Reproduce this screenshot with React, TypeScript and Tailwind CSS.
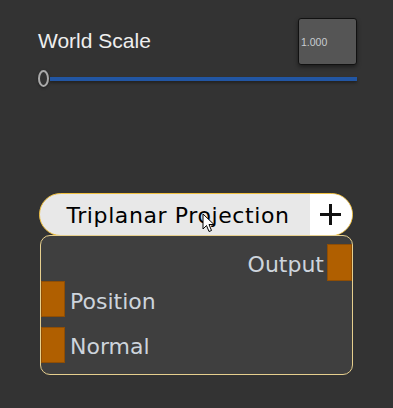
import React from "react";

function Port() {
  return <div className="w-[24px] h-[36px] shrink-0 bg-[#b05f00] border border-[#8f4e05]" />;
}

export default function App() {
  return (
    <div className="relative w-[393px] h-[408px] bg-[#333333] overflow-hidden pl-[38px] pr-[36px] pt-[18px]" style={{ fontFamily: '"Liberation Sans", Arial, sans-serif' }}>
      <div className="flex items-start justify-between">
        <div className="mt-[11px] text-[21px] leading-[24px] text-[#eeeeee]">World Scale</div>
        <div className="w-[59px] h-[47px] bg-[#555555] border border-[#111111] rounded-[3px] shadow-[0_2px_4px_rgba(0,0,0,0.45)] flex items-center pl-[2px] pt-[2px]">
          <span className="text-[10.5px] text-[#c8ccd0]">1.000</span>
        </div>
      </div>
      <div className="mt-[5px] h-[17px] flex items-center">
        <div className="w-[11px] h-[17px] rounded-[50%] border-2 border-[#aaaaaa] shrink-0 shadow-[0_1px_3px_rgba(0,0,0,0.4)]" />
        <div className="ml-[1px] flex-1 h-[4px] bg-[#2256a3] shadow-[0_2px_3px_rgba(0,0,0,0.35)]" />
      </div>

      <div className="mt-[106px] ml-px w-[314px]" style={{ fontFamily: '"DejaVu Sans", Verdana, sans-serif' }}>
        <div className="h-[43px] rounded-full border border-[#f0c040] bg-[#e8e8e8] overflow-hidden flex">
          <div className="flex-1 flex items-center justify-center text-[22px] leading-[43px] tracking-[0.6px] text-black pl-[6px] pt-[2px]">
            Triplanar Projection
          </div>
          <div className="w-[42px] bg-white flex items-center justify-center pr-[1px]">
            <svg width="21" height="21" viewBox="0 0 21 21">
              <path d="M0 10.5H21M10.5 0V21" stroke="#111" strokeWidth="3" />
            </svg>
          </div>
        </div>
        <div className="-mt-px ml-px w-[313px] h-[140px] rounded-[10px] border border-[#e6cf8e] bg-[#3f3f3f] flex flex-col pt-[8px]">
          <div className="flex justify-end items-start h-[37px]">
            <span className="mt-[3px] mr-[3px] text-[22px] leading-[36px] text-[#cdd4dc]">Output</span>
            <div className="w-[25px] h-[37px] bg-[#b05f00] border border-[#8f4e05]" />
          </div>
          <div className="flex items-start h-[36px]">
            <Port />
            <span className="mt-[3px] ml-[5px] text-[22px] leading-[36px] text-[#cdd4dc]">Position</span>
          </div>
          <div className="mt-[10px] flex items-start h-[36px]">
            <Port />
            <span className="mt-[2px] ml-[5px] text-[22px] leading-[36px] text-[#cdd4dc]">Normal</span>
          </div>
        </div>
      </div>

      <svg className="absolute left-[202px] top-[213px]" width="13" height="20" viewBox="0 0 13 20">
        <path d="M1 1V16L4.5 12.5L7 18.5L9.5 17.5L7 11.5H12Z" fill="#ffffff" stroke="#000000" strokeWidth="1" strokeLinejoin="round" />
      </svg>
    </div>
  );
}
